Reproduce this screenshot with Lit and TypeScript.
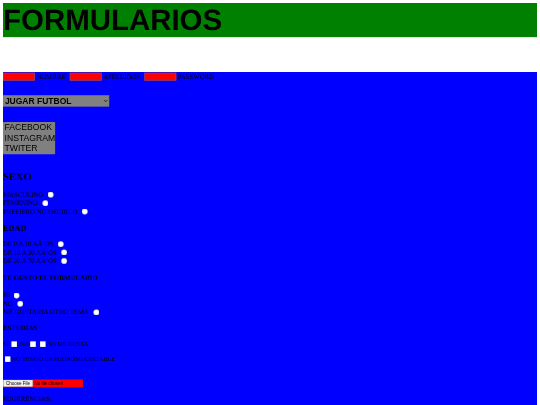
import { LitElement, html, css } from "lit";
import { customElement } from "lit/decorators.js";

@customElement("app-root")
export class AppRoot extends LitElement {
  static styles = css`
    :host {
      display: block;
      width: 540px;
      height: 405px;
      overflow: hidden;
      background: #fff;
    }
    .page {
      width: 1440px;
      height: 1080px;
      box-sizing: border-box;
      padding: 8px 8px 0;
      overflow: hidden;
      background: #fff;
      transform: scale(0.375);
      transform-origin: 0 0;
      filter: blur(0.9px);
      text-rendering: geometricPrecision;
      font-family: "Liberation Serif", serif;
      font-size: 18px;
      color: #000;
    }
    h1 {
      margin: 0 0 93px;
      background: #008000;
      font: bold 78.5px/91px "Liberation Sans", Arial, sans-serif;
    }
    form {
      background: #0000ff;
      min-height: 900px;
      display: flex;
      flex-direction: column;
      align-items: flex-start;
    }
    .top { display: flex; align-items: center; height: 21px; margin-top: 2px; }
    .top span { margin: 0 12px 0 4px; }
    .text {
      box-sizing: border-box;
      width: 85px;
      height: 21px;
      padding: 0;
      margin: 0;
      background: #ff0000;
      border: 2px solid #7f4a7a;
    }
    select.one {
      margin-top: 39px;
      width: 283px;
      height: 30px;
      background: #808080;
      border: 1px solid #767676;
      font: bold 22.7px "Liberation Sans", Arial, sans-serif;
      color: #000;
    }
    select.many {
      margin-top: 41px;
      width: 139px;
      background: #808080;
      border: none;
      overflow: hidden;
      font: 23px "Liberation Sans", Arial, sans-serif;
      color: #000;
    }
    select.many option { padding-left: 4px; }
    h2 { margin: 42px 0 0; font-size: 28px; line-height: 37px; }
    h3 { margin: 18px 0 0; font-size: 22px; line-height: 27px; }
    h4 { margin: 24px 0 0; font-size: 18.2px; line-height: 21px; }
    h4.study { margin-top: 20px; }
    .row { display: flex; align-items: center; height: 22.6px; }
    .row input { margin: 3px 3px 3px 12px; width: 16px; height: 16px; }
    .rows { margin-top: 18px; }
    .rows.edad { margin-top: 19px; }
    .rows.gusto { margin-top: 24px; }
    .checks { margin-top: 21px; height: 22px; line-height: 22px; font-size: 16.5px; white-space: nowrap; }
    .checks input { margin: 3px; width: 16px; height: 16px; vertical-align: middle; }
    .checks.second { margin-top: 18px; }
    .checks.second input { margin-left: 4px; }
    input[type="file"] {
      margin-top: 44px;
      width: 213px;
      height: 21px;
      background: #ff0000;
      font-size: 12px;
      font-family: "Liberation Sans", Arial, sans-serif;
    }
    .sug { margin-top: 18px; line-height: 24px; }
  `;

  private radios(items: string[], name: string) {
    return html`<div class="rows ${name}">
      ${items.map(
        (t) => html`<div class="row"><span>${t}</span><input type="radio" name=${name} /></div>`
      )}
    </div>`;
  }

  render() {
    return html`
      <div class="page">
        <h1>FORMULARIOS</h1>
        <form>
          <div class="top">
            <input class="text" type="text" /><span>NOMBRE</span>
            <input class="text" type="text" /><span>APELLIDOS</span>
            <input class="text" type="password" /><span>PASSWORD</span>
          </div>
          <select class="one"><option>JUGAR FUTBOL</option></select>
          <select class="many" size="3">
            <option>FACEBOOK</option>
            <option>INSTAGRAM</option>
            <option>TWITER</option>
          </select>
          <h2>SEXO</h2>
          ${this.radios(["MASCULINO", "FEMENINO", "PREFIERO NO DECIRLO"], "sexo")}
          <h3>EDAD</h3>
          ${this.radios(["DE 0 A 10 AÃ‘OS", "DE 10 A 20 AÃ‘OS", "DE 20 A 70 AÃ‘OS"], "edad")}
          <h4>TE GUSTO EL FORMULARIO</h4>
          ${this.radios(["SI", "NO", "ME GUSTARIA OTRO TEMA"], "gusto")}
          <h4 class="study">ESTUDIAS</h4>
          <div class="checks">SI <input type="checkbox" /> NO<input type="checkbox" /> <input type="checkbox" />NO ME GUSTA</div>
          <div class="checks second"><input type="checkbox" />NO TENGO LA ECONOMIA ESTABLE</div>
          <input type="file" />
          <div class="sug">SUGERENCIAS:</div>
        </form>
      </div>
    `;
  }
}
